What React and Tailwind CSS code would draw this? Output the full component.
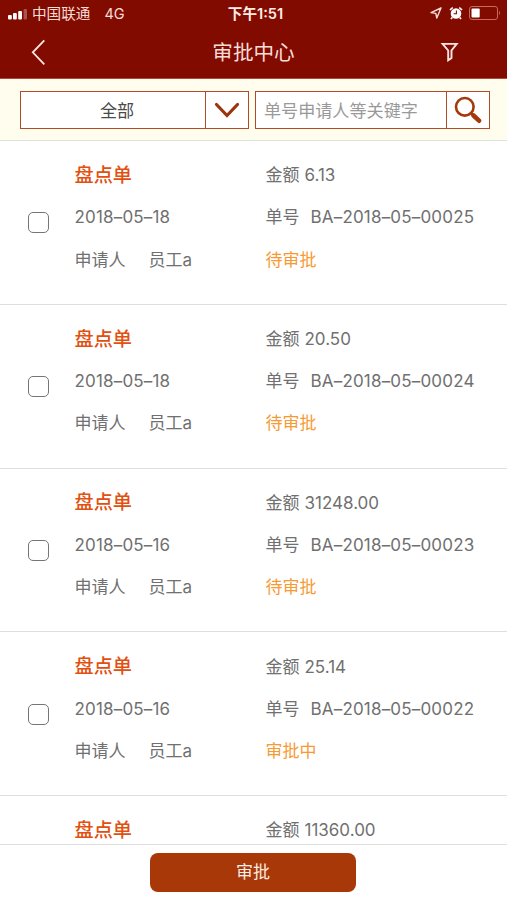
const records = [
  { date: '2018–05–18', amount: '6.13', no: 'BA–2018–05–00025', status: '待审批' },
  { date: '2018–05–18', amount: '20.50', no: 'BA–2018–05–00024', status: '待审批' },
  { date: '2018–05–16', amount: '31248.00', no: 'BA–2018–05–00023', status: '待审批' },
  { date: '2018–05–16', amount: '25.14', no: 'BA–2018–05–00022', status: '审批中' },
  { amount: '11360.00' },
];

function StatusBar() {
  return (
    <div className="flex h-7 items-center text-[#f8dcd8]">
      <div className="flex flex-1 items-center pl-2">
        <svg width="20" height="11" viewBox="0 0 20 11" fill="#fff">
          <rect x="0" y="6" width="3.8" height="4.5" rx="1" />
          <rect x="5" y="4" width="3.8" height="6.5" rx="1" />
          <rect x="10.2" y="2" width="3.8" height="8.5" rx="1" />
          <rect x="15.6" y="0" width="3.4" height="10.5" rx="1" opacity=".3" />
        </svg>
        <span className="ml-1 text-[14.6px] leading-5">中国联通</span>
        <span className="ml-3.5 text-[14.5px] leading-5">4G</span>
      </div>
      <span className="pl-0.5 text-[14.6px] font-semibold leading-5 text-[#ffece8]">下午1:51</span>
      <div className="flex flex-1 items-center justify-end pr-1.5">
        <svg width="12" height="12" viewBox="0 0 12 12" fill="none" stroke="#f8dcd8" strokeWidth="1.4" strokeLinejoin="round" className="-mt-0.5">
          <path d="M11 1 L1 5.6 L5.8 6.4 L6.8 11 Z" />
        </svg>
        <svg width="14" height="14" viewBox="0 0 14 14" className="-mt-0.5 ml-[7px]" fill="none">
          <circle cx="7" cy="7.5" r="5.3" fill="#fff" />
          <path d="M1 4 L3.7 1.5 M13 4 L10.3 1.5 M3.2 11.5 L2 13 M10.8 11.5 L12 13" stroke="#fff" strokeWidth="1.7" />
          <path d="M7.4 4.5 V7.8 H4.6" stroke="#820b00" strokeWidth="1.1" />
        </svg>
        <svg width="32" height="15" viewBox="0 0 32 15" className="-mt-0.5 ml-1.5" fill="none">
          <rect x=".5" y=".5" width="28" height="13" rx="2.5" stroke="#c9685f" strokeWidth="1" />
          <rect x="2.5" y="2.5" width="8.2" height="9" rx="1" fill="#fff" />
          <path d="M30 4.8 Q32 7 30 9.2Z" fill="#c9685f" />
        </svg>
      </div>
    </div>
  );
}

function NavBar() {
  return (
    <div className="flex h-[50px] items-center pl-[31px] pr-12 text-[#f8dcd8]">
      <svg width="16" height="28" viewBox="0 0 16 28" fill="none" stroke="#fbe5e2" strokeWidth="1.8" className="-mt-0.5">
        <path d="M13.3 2.3 L1.8 14.3 L13.3 26.3" />
      </svg>
      <h1 className="flex-1 pl-5 text-center text-[20.6px] leading-none">审批中心</h1>
      <svg width="19" height="20" viewBox="0 0 19 20" fill="none" stroke="#fbe5e2" strokeWidth="1.9" className="-mt-0.5">
        <path d="M2.6 1.9 H16.7 L11.5 8.5 V16 L8.2 18.3 V8.5 Z" />
      </svg>
    </div>
  );
}

function FilterBar() {
  return (
    <div className="flex h-[62px] shrink-0 items-start border-b border-[#dfdfdb] bg-[#fffeee] pl-5 pt-[12px] text-[17.1px]">
      <div className="flex h-[38px] w-[229px] border border-[#b24c26] bg-white">
        <span className="flex flex-1 items-center justify-center pl-2 pt-px text-[#4a4a4a]">全部</span>
        <button className="flex w-[43px] items-center justify-center border-l border-[#b24c26]">
          <svg width="26" height="17" viewBox="0 0 26 17" fill="none" stroke="#9c350d" strokeWidth="3.2" strokeLinecap="round">
            <path d="M2.5 2.5 L13 13.5 L23.5 2.5" />
          </svg>
        </button>
      </div>
      <div className="ml-1.5 flex h-[38px] w-[235px] border border-[#b24c26] bg-white">
        <span className="flex flex-1 items-center whitespace-nowrap pl-2 pt-px text-[#999]">单号申请人等关键字</span>
        <button className="flex w-[43px] items-center justify-center border-l border-[#b24c26]">
          <svg width="28" height="28" viewBox="0 0 28 28" fill="none" stroke="#a5390c">
            <circle cx="10.8" cy="10.8" r="8.8" strokeWidth="2.6" />
            <path d="M17.1 17.1 L19.5 19.5" strokeWidth="2.6" />
            <path d="M19.5 19.5 L25 24.7" strokeWidth="4.6" strokeLinecap="round" />
          </svg>
        </button>
      </div>
    </div>
  );
}

function Record({ date, amount, no, status }) {
  return (
    <li className="flex h-[163.75px] shrink-0 border-b border-[#dedede] pt-[13.4px] text-[17px] leading-[42.1px] text-[#707070]">
      <div className="w-[74.5px] shrink-0 pl-[27.5px] pt-[58px]">
        {date && <div className="h-[21px] w-[21px] rounded-[5px] border-[1.5px] border-[#757575] bg-white" />}
      </div>
      <div className="w-[191px] shrink-0">
        <p className="-mt-[0.6px] mb-[0.6px] text-[19.2px] font-medium text-[#e2500f]">盘点单</p>
        {date && <p className="tracking-[0.18px]">{date}</p>}
        {date && <p className="flex gap-[23px]"><span>申请人</span><span>员工a</span></p>}
      </div>
      <div className="whitespace-nowrap">
        <p className="flex gap-[5px]"><span>金额</span><span>{amount}</span></p>
        {no && <p className="flex gap-[11px]"><span>单号</span><span className="tracking-[0.18px]">{no}</span></p>}
        {status && <p className="text-[#f79a34]">{status}</p>}
      </div>
    </li>
  );
}

export default function App() {
  return (
    <div className="flex h-[900px] w-[507px] flex-col overflow-hidden bg-white font-['Inter','Noto_Sans_CJK_SC',sans-serif]">
      <header className="h-[79px] shrink-0 border-b border-[#b4483a] bg-[#820b00]">
        <StatusBar />
        <NavBar />
      </header>
      <FilterBar />
      <ul className="flex min-h-0 flex-1 flex-col overflow-hidden">
        {records.map((r) => <Record key={r.amount} {...r} />)}
      </ul>
      <footer className="flex h-14 shrink-0 justify-center border-t border-[#dedede] bg-white pr-px pt-2">
        <button className="h-[39px] w-[206px] rounded-lg bg-[#a83808] text-[17px] text-[#fdeee6]">审批</button>
      </footer>
    </div>
  );
}
